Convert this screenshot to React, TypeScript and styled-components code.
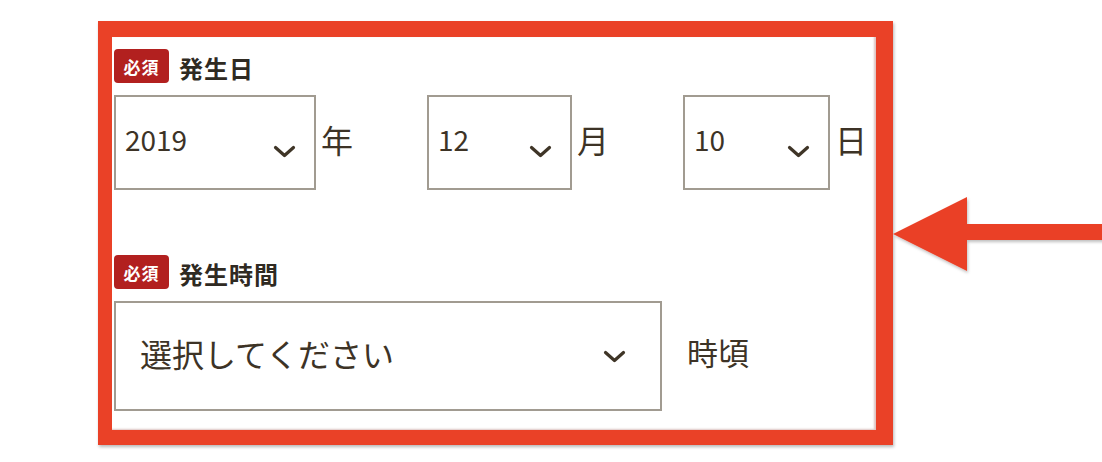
import React from "react";
import styled, { createGlobalStyle } from "styled-components";

const GlobalStyle = createGlobalStyle`
  html, body { margin: 0; padding: 0; background: #ffffff; }
  body { font-family: "Noto Sans CJK JP", "Noto Sans", sans-serif; }
`;

const Page = styled.div`
  width: 1102px;
  height: 462px;
  box-sizing: border-box;
  padding: 21px 0 0 98px;
  display: flex;
  align-items: flex-start;
`;

const Frame = styled.div`
  width: 796px;
  height: 424px;
  box-sizing: border-box;
  border-style: solid;
  border-color: #ea4127;
  border-width: 16px 17px 15px 14px;
  box-shadow: 1px 2px 3px rgba(0, 0, 0, 0.28), inset -2px -1px 2px rgba(120, 20, 10, 0.25);
  padding: 12px 0 0 2px;
  display: flex;
  flex-direction: column;
`;

const Section = styled.section<{ $gapTop?: number }>`
  display: flex;
  flex-direction: column;
  gap: 12px;
  margin-top: ${(p) => p.$gapTop ?? 0}px;
`;

const LabelRow = styled.div`
  display: flex;
  align-items: center;
  gap: 10px;
  height: 34px;
`;

const Badge = styled.span`
  width: 55px;
  height: 34px;
  border-radius: 4px;
  background: #b2201f;
  color: #ffffff;
  font-weight: 700;
  font-size: 17px;
  letter-spacing: 1px;
  display: flex;
  align-items: center;
  justify-content: center;
  line-height: 1;
`;

const Label = styled.span`
  font-size: 24px;
  letter-spacing: 1px;
  font-weight: 700;
  color: #2f2a22;
  line-height: 1;
  margin-top: 4px;
`;

const DateRow = styled.div`
  display: flex;
  align-items: center;
  gap: 74px;
`;

const Group = styled.div`
  display: flex;
  align-items: center;
  gap: 5px;
`;

const SelectBox = styled.div<{ $w: number; $h: number; $padL: number; $padR: number }>`
  width: ${(p) => p.$w}px;
  height: ${(p) => p.$h}px;
  box-sizing: border-box;
  border: 2px solid #a19b91;
  background: #ffffff;
  display: flex;
  align-items: center;
  justify-content: space-between;
  padding: 0 ${(p) => p.$padR}px 0 ${(p) => p.$padL}px;
`;

const Value = styled.span<{ $size: number; $lift: number }>`
  font-size: ${(p) => p.$size}px;
  color: #3d3326;
  line-height: 1;
  margin-bottom: ${(p) => p.$lift}px;
`;

const Chevron = styled.svg<{ $drop: number }>`
  width: 23px;
  height: 13px;
  flex: none;
  margin-top: ${(p) => p.$drop}px;
`;

const Unit = styled.span`
  font-size: 32px;
  color: #3d3326;
  line-height: 1;
  margin-bottom: 8px;
`;

const TimeRow = styled.div`
  display: flex;
  align-items: center;
  gap: 25px;
`;

const TimeUnit = styled.span`
  font-size: 31px;
  color: #3d3326;
  line-height: 1;
  margin-bottom: 9px;
`;

const ArrowSvg = styled.svg`
  width: 209px;
  height: 80px;
  flex: none;
  margin-top: 174px;
  overflow: visible;
`;

function Arrow() {
  return (
    <ArrowSvg viewBox="0 0 209 80">
      <defs>
        <filter id="ds" x="-10%" y="-20%" width="130%" height="150%">
          <feDropShadow dx="1" dy="2" stdDeviation="1.5" floodColor="#000" floodOpacity="0.25" />
        </filter>
      </defs>
      <g filter="url(#ds)">
        <rect x="72" y="29" width="140" height="16" fill="#ea4127" />
        <polygon points="0,39 74,2 74,76" fill="#ea4127" />
      </g>
    </ArrowSvg>
  );
}

function Down({ drop }: { drop: number }) {
  return (
    <Chevron viewBox="0 0 23 13" $drop={drop}>
      <path d="M2.5 2.5 L11.5 10.5 L20.5 2.5" fill="none" stroke="#3f3527" strokeWidth="3.2" strokeLinecap="round" strokeLinejoin="round" />
    </Chevron>
  );
}

const dates = [
  { value: "2019", unit: "年", w: 202 },
  { value: "12", unit: "月", w: 145 },
  { value: "10", unit: "日", w: 147 },
];

export default function App() {
  return (
    <>
      <GlobalStyle />
      <Page>
        <Frame>
          <Section>
            <LabelRow>
              <Badge>必須</Badge>
              <Label>発生日</Label>
            </LabelRow>
            <DateRow>
              {dates.map((d) => (
                <Group key={d.unit}>
                  <SelectBox $w={d.w} $h={95} $padL={9} $padR={18}>
                    <Value $size={28} $lift={7}>{d.value}</Value>
                    <Down drop={17} />
                  </SelectBox>
                  <Unit>{d.unit}</Unit>
                </Group>
              ))}
            </DateRow>
          </Section>
          <Section $gapTop={65}>
            <LabelRow>
              <Badge>必須</Badge>
              <Label>発生時間</Label>
            </LabelRow>
            <TimeRow>
              <SelectBox $w={548} $h={110} $padL={24} $padR={34}>
                <Value $size={32} $lift={6}>選択してください</Value>
                <Down drop={0} />
              </SelectBox>
              <TimeUnit>時頃</TimeUnit>
            </TimeRow>
          </Section>
        </Frame>
        <Arrow />
      </Page>
    </>
  );
}
